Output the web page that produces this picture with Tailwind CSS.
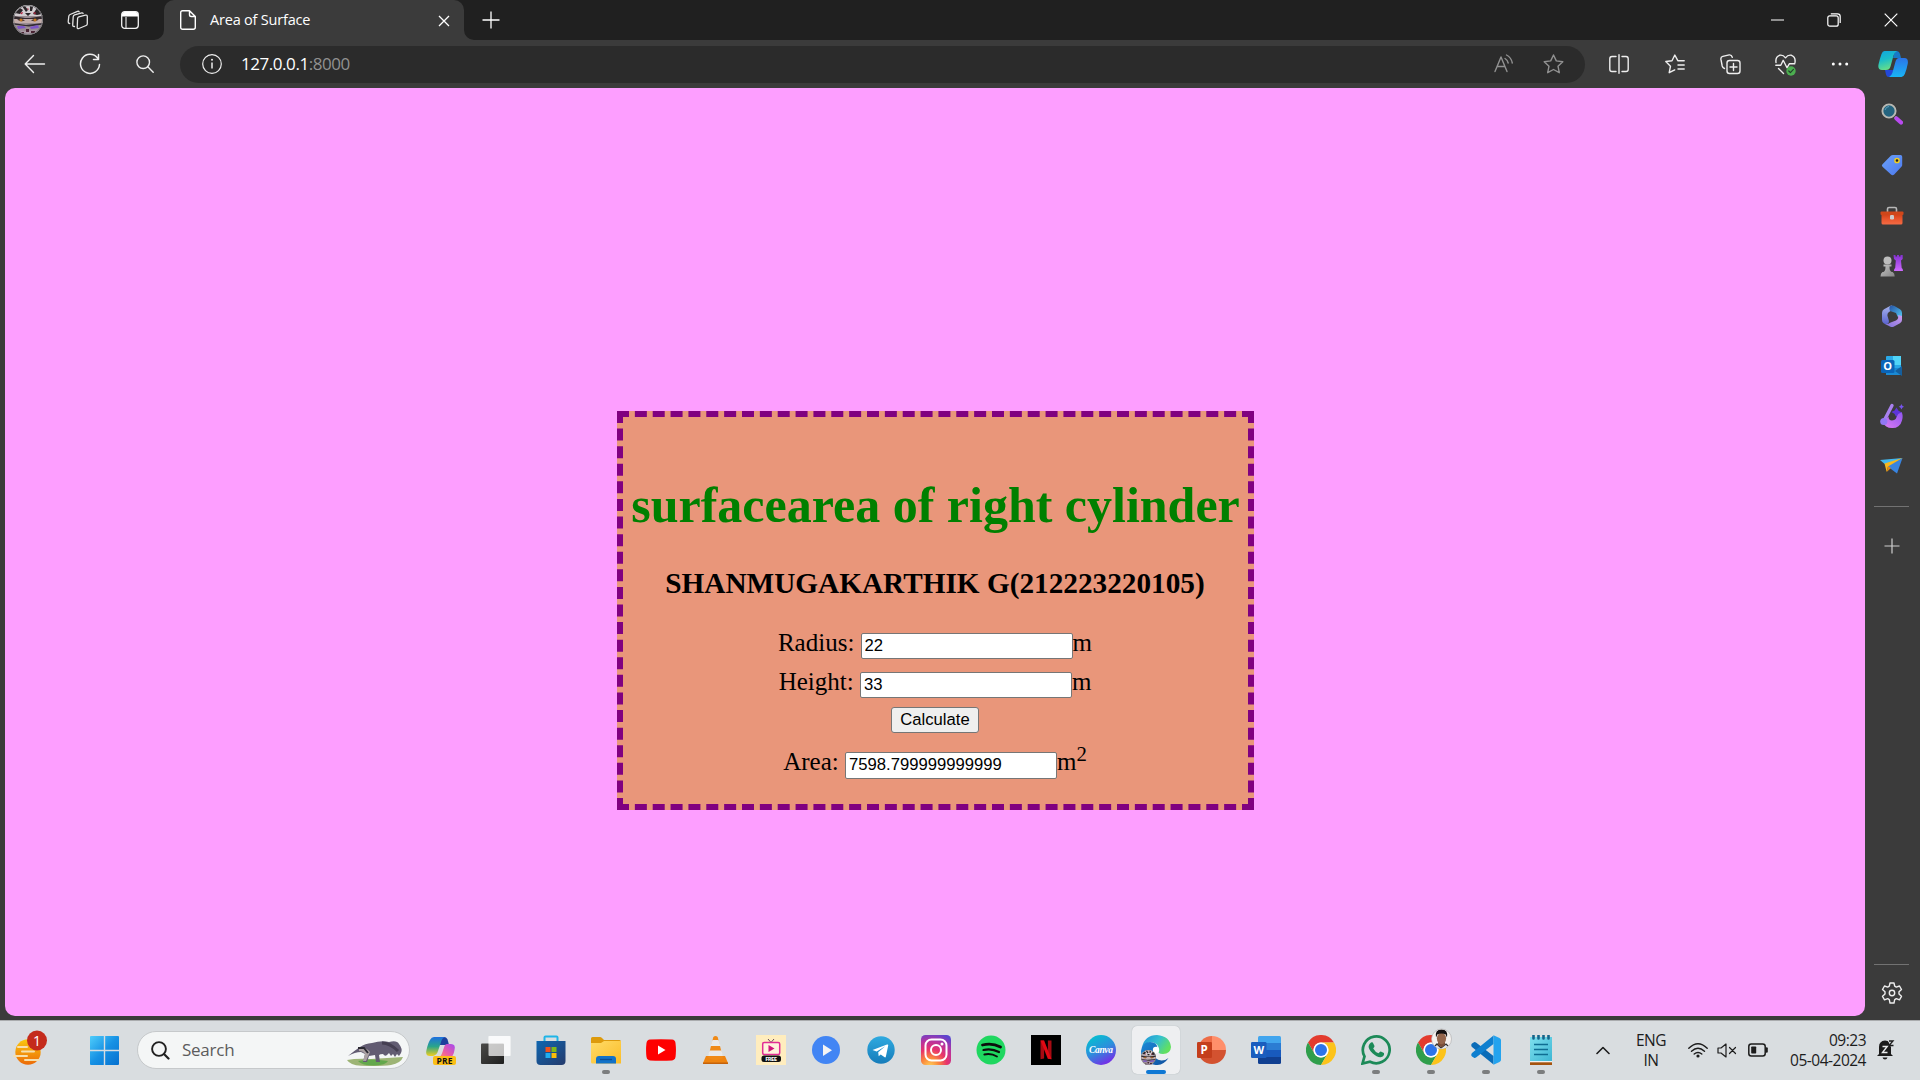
<!DOCTYPE html>
<html lang="en">
<head>
<meta charset="utf-8">
<title>Area of Surface</title>
<script src="https://cdn.jsdelivr.net/npm/@tailwindcss/browser@4"></script>
</head>
<body class="w-[1920px] h-[1080px] overflow-hidden bg-[#3b3b3b] font-['Open_Sans',sans-serif] flex flex-col">
<!-- shared gradients and repeated marks -->
<svg class="absolute w-0 h-0" aria-hidden="true">
  <defs>
    <linearGradient id="cpA" x1="0" y1="0" x2=".3" y2="1"><stop offset="0" stop-color="#10a5e0"/><stop offset=".5" stop-color="#1bbdc9"/><stop offset="1" stop-color="#63dd8b"/></linearGradient>
    <linearGradient id="cpB" x1="0" y1="0" x2="0" y2="1"><stop offset="0" stop-color="#2b74e8"/><stop offset="1" stop-color="#19b5f5"/></linearGradient>
    <linearGradient id="preA" x1="0" y1="0" x2="0" y2="1"><stop offset="0" stop-color="#1e6fe0"/><stop offset=".5" stop-color="#2aa58a"/><stop offset="1" stop-color="#f2cf1c"/></linearGradient>
    <linearGradient id="preB" x1="1" y1="0" x2="0" y2="1"><stop offset="0" stop-color="#a548f0"/><stop offset=".6" stop-color="#ee5fa0"/><stop offset="1" stop-color="#ff9a55"/></linearGradient>
    <linearGradient id="tagG" x1="0" y1="0" x2="1" y2="1"><stop offset="0" stop-color="#6ba2f8"/><stop offset="1" stop-color="#4c78ee"/></linearGradient>
    <linearGradient id="boxG" x1="0" y1="0" x2="0" y2="1"><stop offset="0" stop-color="#c93c12"/><stop offset=".5" stop-color="#e8542b"/><stop offset="1" stop-color="#f36b45"/></linearGradient>
    <linearGradient id="rookG" x1="0" y1="0" x2="0" y2="1"><stop offset="0" stop-color="#8330d0"/><stop offset="1" stop-color="#cf6bff"/></linearGradient>
    <linearGradient id="pawnG" x1="0" y1="0" x2="1" y2="1"><stop offset="0" stop-color="#c4c4c4"/><stop offset="1" stop-color="#858585"/></linearGradient>
    <linearGradient id="purG" x1="1" y1="0" x2="0" y2="1"><stop offset="0" stop-color="#8f55f0"/><stop offset="1" stop-color="#dd7cf3"/></linearGradient>
    <linearGradient id="winG" gradientUnits="userSpaceOnUse" x1="0" y1="0" x2="29" y2="29"><stop offset="0" stop-color="#4fcdfb"/><stop offset=".5" stop-color="#1691e4"/><stop offset="1" stop-color="#0670cf"/></linearGradient>
    <linearGradient id="sunG" x1="0" y1="0" x2="0" y2="1"><stop offset="0" stop-color="#fac80e"/><stop offset="1" stop-color="#ec6a08"/></linearGradient>
    <linearGradient id="storeG" x1="0" y1="0" x2="1" y2="1"><stop offset="0" stop-color="#0f66b0"/><stop offset="1" stop-color="#243a6c"/></linearGradient>
    <linearGradient id="foldG" x1="0" y1="0" x2="1" y2="1"><stop offset="0" stop-color="#ffdb68"/><stop offset="1" stop-color="#fbbd28"/></linearGradient>
    <linearGradient id="tgG" x1="0" y1="0" x2="0" y2="1"><stop offset="0" stop-color="#2faae0"/><stop offset="1" stop-color="#167cba"/></linearGradient>
    <radialGradient id="igG" cx=".3" cy="1.05" r="1.15"><stop offset="0" stop-color="#ffd25a"/><stop offset=".25" stop-color="#fb8a3c"/><stop offset=".5" stop-color="#e8336b"/><stop offset=".75" stop-color="#b633a0"/><stop offset="1" stop-color="#5a45d0"/></radialGradient>
    <linearGradient id="cvG" x1=".2" y1="0" x2=".7" y2="1"><stop offset="0" stop-color="#02c3cf"/><stop offset=".5" stop-color="#2c8fdc"/><stop offset="1" stop-color="#7b25e8"/></linearGradient>
    <linearGradient id="edA" x1="0" y1="0" x2="1" y2=".5"><stop offset="0" stop-color="#1f8fd8"/><stop offset=".55" stop-color="#34c0d0"/><stop offset="1" stop-color="#62e060"/></linearGradient>
    <linearGradient id="edB" x1="0" y1="0" x2="1" y2="1"><stop offset="0" stop-color="#1b8ad8"/><stop offset="1" stop-color="#0f4f9e"/></linearGradient>
    <linearGradient id="noteG" x1="0" y1="0" x2="1" y2="1"><stop offset="0" stop-color="#7fe0ee"/><stop offset="1" stop-color="#3db6d4"/></linearGradient>
    <linearGradient id="mA" x1="0" y1="0" x2="0" y2="1"><stop offset="0" stop-color="#a9b4ec"/><stop offset="1" stop-color="#5a63cf"/></linearGradient>
    <linearGradient id="mB" x1="0" y1="0" x2="1" y2="1"><stop offset="0" stop-color="#2450a4"/><stop offset="1" stop-color="#56d0f6"/></linearGradient>
    <linearGradient id="mC" x1="0" y1="1" x2="1" y2="0"><stop offset="0" stop-color="#7b72da"/><stop offset="1" stop-color="#cf9af0"/></linearGradient>
    <linearGradient id="tvA" x1="0" y1="0" x2="1" y2="1"><stop offset="0" stop-color="#4a4a48"/><stop offset="1" stop-color="#1f1f1f"/></linearGradient>
    <clipPath id="ava"><circle cx="15" cy="15" r="15"/></clipPath>
    <clipPath id="face"><circle cx="25.500" cy="4" r="9.700"/></clipPath>
    <symbol id="eyes" viewBox="0 0 30 30">
      <g clip-path="url(#ava)">
        <rect width="30" height="30" fill="#9a8d92"/>
        <rect width="30" height="11" fill="#d2cdd0"/>
        <path d="M2 8l5-5 3 2-3 4zM9 1l3 0 3 4-2 2zM17 1l3 1-1 4-2 0zM20 9l4-6 2 1 3 5-5 1zM12 8l6 0-3 3z" fill="#2a2528"/>
        <path d="M7 8l3-1-1 2.500zM20 7.500l3 0-1 2zM14 3l2 1-1 1z" fill="#b5223e"/>
        <path d="M0 11l12 2 5 0 13-2v3l-12 1-18-1z" fill="#332a2f"/>
        <rect y="14" width="30" height="4" fill="#c3adab"/>
        <path d="M4 14.500q4-2 8 1-4 2-8-1zM18 15.500q4-3 8-1-4 3-8 1z" fill="#4b3835"/>
        <circle cx="8" cy="15" r="1.500" fill="#c5781e"/><circle cx="22" cy="15" r="1.500" fill="#c5781e"/>
        <path d="M0 18l13 2 17-2v1.500l-14 2-16-2z" fill="#332b35"/>
        <path d="M4 21h7l2 2-8 1zM17 22l8-2 1 3-8 1z" fill="#7d55c8"/>
        <path d="M0 25l12 1 18-1v5h-30z" fill="#ab9aa6"/>
        <path d="M8 27h3v2h-3zM18 26h4v2h-4zM13 24h3v3h-3z" fill="#4a2434"/>
      </g>
      <circle cx="15" cy="15" r="14.500" fill="none" stroke="#77777a"/>
    </symbol>
    <symbol id="chrome" viewBox="0 0 30 30">
      <path d="M2 7.500A15 15 0 0 1 28 7.500L15 7.500A7.500 7.500 0 0 0 8.500 18.750z" fill="#e33b2e"/>
      <path d="M2 7.500A15 15 0 0 0 15 30L21.500 18.750A7.500 7.500 0 0 1 8.500 18.750z" fill="#2f9e4b"/>
      <path d="M28 7.500A15 15 0 0 1 15 30L21.500 18.750A7.500 7.500 0 0 0 15 7.500z" fill="#fcc31b"/>
      <circle cx="15" cy="15" r="7.500" fill="#fff"/><circle cx="15" cy="15" r="6" fill="#2d74ea"/>
    </symbol>
  </defs>
</svg>

<!-- tab strip -->
<header class="h-10 shrink-0 bg-[#202020] flex items-center">
  <div class="w-14 flex justify-center"><svg class="size-[30px]"><use href="#eyes"/></svg></div>
  <div class="w-[43px] flex justify-center">
    <svg width="22" height="20" viewBox="0 0 22 20" fill="none" stroke="#e4e4e4" stroke-width="1.300" stroke-linejoin="round" stroke-linecap="round"><path d="M10.600 8.300q.2-1 1.200-1.400l6.600-1.800q1.900-.4 1.900 1.400v7.300q0 1.200-1.200 1.700l-7.200 3q-1.700.6-1.700-1z"/><path d="M7.500 16.500q-2 .2-1.800-1.600l.5-8.200q.1-1.300 1.400-1.800l7.200-2q1-.2 1.300.6"/><path d="M2.700 13.500q-1.600-.2-1.500-1.800l.6-5.500q.1-1.200 1.300-1.700l7.400-3.100q1.300-.4 1.700.5"/></svg>
  </div>
  <div class="w-[61px] flex justify-center">
    <svg width="18" height="18" viewBox="0 0 18 18" fill="none"><rect x=".7" y=".7" width="16.600" height="16.600" rx="3" stroke="#f2f2f2" stroke-width="1.300"/><path d="M1 5.500V3.500a2.500 2.500 0 0 1 2.500-2.500h11A2.500 2.500 0 0 1 17 3.500v2z" fill="#fff"/><path d="M5 6v11" stroke="#ddd" stroke-width="1.200"/></svg>
  </div>
  <div class="ml-1 w-[300px] h-10 bg-[#3b3b3b] rounded-t-[10px] relative flex items-center">
    <svg class="absolute -left-[10px] bottom-0" width="10" height="10"><path d="M10 0v10H0A10 10 0 0 0 10 0z" fill="#3b3b3b"/></svg>
    <svg class="absolute -right-[10px] bottom-0" width="10" height="10"><path d="M0 0v10h10A10 10 0 0 1 0 0z" fill="#3b3b3b"/></svg>
    <svg class="ml-4" width="16" height="20" viewBox="0 0 16 20" fill="none" stroke="#fff" stroke-width="1.400" stroke-linejoin="round"><path d="M2.500.7h7l5.800 5.800v10.800q0 2-2 2H2.700q-2 0-2-2V2.700q0-2 1.800-2zM9.500.7v4q0 1.800 1.800 1.800h4"/></svg>
    <span class="ml-[14px] text-[14.500px] tracking-[-0.200px] text-white whitespace-nowrap leading-5">Area of Surface</span>
    <svg class="ml-auto mr-[14px] mt-px" width="12" height="12" viewBox="0 0 12 12" stroke="#fff" stroke-width="1.300"><path d="M1 1l10 10M11 1L1 11"/></svg>
  </div>
  <div class="w-[53px] flex justify-center"><svg width="18" height="18" viewBox="0 0 18 18" stroke="#fff" stroke-width="1.300"><path d="M9 .5v17M.5 9h17"/></svg></div>
  <div class="ml-auto flex items-center">
    <div class="w-[57px] flex justify-center"><svg width="13" height="13" viewBox="0 0 13 13"><path d="M0 6h13" stroke="#fff"/></svg></div>
    <div class="w-[56px] flex justify-center"><svg width="14" height="14" viewBox="0 0 14 14" fill="none" stroke="#fff" stroke-width="1.200"><rect x=".8" y="2.800" width="10.400" height="10.400" rx="2"/><path d="M3.800.8h6.700q2.700 0 2.700 2.700v6.500"/></svg></div>
    <div class="w-[58px] flex justify-center"><svg width="14" height="14" viewBox="0 0 14 14" stroke="#fff" stroke-width="1.200"><path d="M.7.7l12.600 12.600M13.300.7L.7 13.300"/></svg></div>
  </div>
</header>

<!-- toolbar -->
<nav class="h-12 shrink-0 bg-[#3b3b3b] flex items-center pl-[7px]">
  <div class="w-14 flex justify-center"><svg width="22" height="20" viewBox="0 0 22 20" fill="none" stroke="#eee" stroke-width="1.400" stroke-linecap="round" stroke-linejoin="round"><path d="M20.500 10H1.500M9.500 1.500L1.200 10l8.300 8.500"/></svg></div>
  <div class="w-[54px] flex justify-center"><svg width="22" height="22" viewBox="0 0 22 22" fill="none" stroke="#eee" stroke-width="1.500" stroke-linecap="round" stroke-linejoin="round"><path d="M20.500 11.500a9.500 9.500 0 1 1-2-6.500M19.500 1.500v5h-5"/></svg></div>
  <div class="w-[55px] flex justify-center"><svg width="18" height="18" viewBox="0 0 18 18" fill="none" stroke="#eee" stroke-width="1.400" stroke-linecap="round"><circle cx="7.200" cy="7.200" r="6.300"/><path d="M11.800 11.800l5.400 5.400"/></svg></div>
  <div class="ml-[8px] w-[1405px] h-[37px] rounded-full bg-[#2b2b2b] flex items-center">
    <svg class="ml-[22px]" width="20" height="20" viewBox="0 0 20 20" fill="none" stroke="#eee" stroke-width="1.200"><circle cx="10" cy="10" r="9.300"/><path d="M10 8.500v6" stroke-width="1.500"/><circle cx="10" cy="5.800" r="1" fill="#eee" stroke="none"/></svg>
    <span class="ml-[19px] text-[17px] text-white tracking-[-0.450px] leading-5">127.0.0.1<span class="text-[#919191]">:8000</span></span>
    <svg class="ml-auto mb-0.5" width="20" height="19" viewBox="0 0 20 19" fill="none" stroke="#919191" stroke-width="1.400" stroke-linecap="round" stroke-linejoin="round"><path d="M1 17.500L7 3l6 14.500M3 12.500h8"/><path d="M11 4.500q2.600 1.500 3.200 4.500M12.500 1q4.800 2.500 5.800 8"/></svg>
    <svg class="ml-[29px] mr-[21px]" width="21" height="20" viewBox="0 0 21 20" fill="none" stroke="#919191" stroke-width="1.400" stroke-linejoin="round"><path d="M10.500 1l2.800 5.900 6.500.8-4.800 4.500 1.300 6.500-5.800-3.200-5.800 3.200L6 12.200 1.200 7.700l6.500-.8z"/></svg>
  </div>
  <div class="ml-[7px] w-[54px] flex justify-center"><svg width="20" height="20" viewBox="0 0 20 20" fill="none" stroke="#eee" stroke-width="1.400" stroke-linecap="round"><path d="M10 .7v18.600M7 2.500H3Q.8 2.500.8 4.700v10.600q0 2.200 2.200 2.200h4M13 2.500h4q2.200 0 2.200 2.200v10.600q0 2.200-2.200 2.200h-4"/></svg></div>
  <div class="w-[57px] flex justify-center"><svg width="20" height="20" viewBox="0 0 20 20" fill="none" stroke="#eee" stroke-width="1.400" stroke-linecap="round" stroke-linejoin="round"><path d="M19.200 6.700h-6.400L9.800 1 7 6.700.8 7.500l4.700 4.700-1.300 6.500 5.500-2.800M13 11h6.200M13 15h6.200"/></svg></div>
  <div class="w-[55px] flex justify-center"><svg width="21" height="21" viewBox="0 0 21 21" fill="none" stroke="#eee" stroke-width="1.400" stroke-linecap="round" stroke-linejoin="round"><rect x="7" y="6.500" width="13" height="13" rx="2.500"/><path d="M13.500 9.500v7M10 13h7M4.500 14.500Q2.600 13.800 2.200 12L.9 5.200Q.6 3 2.800 2.400L9.200.9Q11.500.6 12.300 3.300"/></svg></div>
  <div class="w-[55px] flex justify-center"><svg class="mt-0.5" width="21" height="22" viewBox="0 0 21 22" fill="none" stroke="#eee" stroke-width="1.400" stroke-linecap="round" stroke-linejoin="round"><path d="M1 8.500Q.2 3 4.500 1.300 8 .5 10.500 3.800 13 .5 16.500 1.300 20.800 3 20 8.500"/><path d="M.8 11.300h5l2.400-5 3.800 7.500 2.300-4h5.500M3.500 14.500l5 5"/><circle cx="16" cy="17" r="4.700" fill="#4caf50" stroke="none"/><path d="M13.800 17l1.600 1.600 3-3.200" stroke="#23402a" stroke-width="1.200"/></svg></div>
  <div class="w-[54px] flex justify-center"><svg width="18" height="4" viewBox="0 0 18 4" fill="#fff"><circle cx="2.300" cy="2" r="1.500"/><circle cx="9" cy="2" r="1.500"/><circle cx="15.700" cy="2" r="1.500"/></svg></div>
  <div class="w-[51px] flex justify-center"><svg width="30" height="28" viewBox="0 0 30 28"><path d="M7 20h9l-2 5.500Q13 27 11 27 8.500 27 8 24.500z" fill="#2348d8"/><path d="M17 1h1.500Q21 1 22 4l1 4h-8z" fill="#1878c8"/><path d="M6.500 1H19q-2.500 1-3.500 4.500l-3 11Q11.500 20 8 20H4Q-.5 20 .5 14.500 2 8 3.500 4 4.500 1 6.500 1z" fill="url(#cpA)"/><path d="M21 8h5.500q4 0 3.300 5.500-1.200 6.500-3 10.500-1.300 3-3.300 3H11q2.500-1 3.500-4.500l3-11Q18.500 8 21 8z" fill="url(#cpB)"/></svg></div>
</nav>

<main class="h-[932px] shrink-0 flex pl-[5px]">
  <!-- page viewport -->
  <section class="w-[1860px] h-[928px] bg-[#fd9eff] rounded-[10px] font-['Liberation_Serif',serif] text-black pt-[323px] pl-[612px]">
    <div class="w-[637px] h-[399px] border-6 border-dashed border-[#800080] bg-[#e9967a] flex flex-col items-center pt-[60px] text-[25px] leading-7">
      <h1 class="text-[50px] leading-[56px] font-bold text-[#008000] whitespace-nowrap">surfacearea of right cylinder</h1>
      <h3 class="mt-[33px] -ml-px text-[29.250px] leading-[34px] font-bold whitespace-nowrap">SHANMUGAKARTHIK G(212223220105)</h3>
      <div class="mt-[29px] -ml-px h-7 flex">
        <label class="whitespace-pre">Radius: </label>
        <input type="text" value="22" class="mt-1 w-[212px] h-[26px] px-[3px] bg-white border border-[#767676] rounded-[2px] font-['Liberation_Sans',sans-serif] text-[16.670px]">
        <span>m</span>
      </div>
      <div class="mt-[11px] -ml-px h-7 flex">
        <label class="whitespace-pre">Height: </label>
        <input type="text" value="33" class="mt-1 w-[212px] h-[26px] px-[3px] bg-white border border-[#767676] rounded-[2px] font-['Liberation_Sans',sans-serif] text-[16.670px]">
        <span>m</span>
      </div>
      <button class="mt-[11px] -ml-px w-[88px] h-[26px] bg-[#efefef] border border-[#767676] rounded-[3px] font-['Liberation_Sans',sans-serif] text-[16.670px] leading-[22px]">Calculate</button>
      <div class="mt-[15px] -ml-px h-7 flex">
        <label class="whitespace-pre">Area: </label>
        <input type="text" value="7598.799999999999" class="mt-1 w-[212px] h-[27px] px-[3px] pb-[2px] bg-white border border-[#767676] rounded-[2px] font-['Liberation_Sans',sans-serif] text-[16.670px]">
        <span>m</span><span class="text-[20.800px] leading-5 -mt-[4px]">2</span>
      </div>
    </div>
  </section>

  <!-- sidebar -->
  <aside class="w-[53px] h-[932px] flex flex-col items-center">
    <div class="h-[51px] flex items-center"><svg width="22" height="22" viewBox="0 0 22 22"><path d="M14 14l3 3" stroke="#bbb" stroke-width="2.500"/><circle cx="8" cy="8" r="6.600" fill="#24647f" stroke="#b9b9b3" stroke-width="1.900"/><path d="M4 7q1-3.500 4-3.500" stroke="#5d9db8" fill="none"/><path d="M15.500 15.500l4.500 4" stroke="#b94af0" stroke-width="4.200" stroke-linecap="round"/></svg></div>
    <div class="h-[52px] flex items-center"><svg width="22" height="22" viewBox="0 0 22 22"><path d="M12 1h7.500q1.700 0 1.700 1.700V11q0 1-.8 1.800l-7.200 7.600q-1.700 1.500-3.200 0l-8.500-7.600q-1.300-1.300 0-2.600L9.800 1.800Q10.500 1 12 1z" fill="url(#tagG)"/><circle cx="16" cy="6.500" r="2.100" fill="#222" stroke="#f0cd22" stroke-width="1.500"/></svg></div>
    <div class="h-[50px] flex items-center"><svg width="24" height="20" viewBox="0 0 24 20"><path d="M7.500 6V3q0-1.500 1.500-1.500h6Q16.500 1.500 16.500 3v3" fill="none" stroke="#b7b7b7" stroke-width="1.600"/><rect x="1.500" y="7" width="21" height="11.500" rx="1.500" fill="url(#boxG)"/><rect x=".5" y="5.500" width="23" height="3.500" rx="1" fill="#d0471a"/><rect x="10" y="9" width="4" height="4.500" rx="1.200" fill="#ccc"/></svg></div>
    <div class="h-[50px] flex items-center"><svg width="24" height="24" viewBox="0 0 24 24"><path d="M13.500 1h2v1.500h1.500V1h2v1.500h1.500V1h2.200v4l-1.700 1.500.7 7.500q1.300.5 1.300 3h-9q0-2.500 1.200-3l.6-7.500-1.800-1.500z" fill="url(#rookG)"/><circle cx="7.500" cy="6.500" r="4" fill="#bdbdbd"/><path d="M3.500 10.500h8v2h-2q0 4.500 2.200 5.500h1q2 1 2 4.500H.5q0-3.500 2-4.500h1Q5.500 17 5.500 12.500h-2z" fill="url(#pawnG)"/></svg></div>
    <div class="h-[49px] flex items-center"><svg width="22" height="22" viewBox="0 0 22 22"><path d="M9.500.8L3 4.300Q1 5.500 1 8v7Q1 17.500 3 18.500q3 1.500 4.500-.5.700-1.200.2-3L6.500 11Q6 8.500 8 7l4-2.500Q12-.5 9.500.8z" fill="url(#mA)"/><path d="M9.500.8q1.500-.8 3.500 0l6 3.500q2 1.200 2 3.700v6l-4.500-2.500L15 8 9 6Q7.500 2.500 9.500.8z" fill="url(#mB)"/><path d="M21 11v4q0 2-2 3.200l-6 3.300q-2 1-4 0L3.500 18.700q3.500.8 5.500-1l6-2.200q3-1.200 2-5.500z" fill="url(#mC)"/></svg></div>
    <div class="h-[52px] flex items-center"><svg width="22" height="22" viewBox="0 0 22 22"><rect x="5" y="1" width="15" height="19" rx="1" fill="#2aa9e8"/><path d="M12 1h8v9h-8z" fill="#50d4f8"/><path d="M5 13h16v7H5z" fill="#1a8ad4"/><path d="M21 11l-7 5 7 5z" fill="#155f9e"/><rect x="0" y="5" width="13.500" height="13" rx="1.500" fill="#0a64b8"/><text x="6.700" y="15.200" text-anchor="middle" font-family="Open Sans" font-size="11" font-weight="700" fill="#fff">O</text></svg></div>
    <div class="h-[47px] flex items-center"><svg width="24" height="26" viewBox="0 0 24 26"><path d="M8.500 13.500Q8.500 17.500 12 17.500q5 0 5.500-7.500l4-1q2 3 .5 8.500A9.500 9.500 0 0 1 12 25Q5 25 3 19z" fill="url(#purG)"/><path d="M12 2.500L5 16" stroke="#a880ee" stroke-width="3.400" stroke-linecap="round"/><circle cx="3.800" cy="18.500" r="3.600" fill="#9277f5"/><path d="M16.500 4.500l2 3.200 3 1.500-3.300 1.800-2 3-1.800-3.200-3-1.800 3.200-1.600z" fill="#5d35d8"/><path d="M21.500 1l.8 1.800 1.700.9-1.700 1-.8 1.700-1-1.700-1.700-1 1.700-.9z" fill="#7552ea"/></svg></div>
    <div class="h-[52px] flex items-center"><svg width="23" height="17" viewBox="0 0 23 17"><path d="M0 3L22.500 1 7 9z" fill="#43b8ee"/><path d="M22.500 1L7 9l10 7.500z" fill="#3884e0"/><path d="M22.500 1L4.500 6.500l2.200 8.500L8 9.500z" fill="#f7b91e"/><path d="M6.700 15L8 9l3 2z" fill="#e08a14"/></svg></div>
    <div class="mt-[15px] w-[35px] h-px bg-[#727272]"></div>
    <svg class="mt-[31px]" width="16" height="16" viewBox="0 0 16 16"><path d="M8 .5v15M.5 8h15" stroke="#cfcfcf" stroke-width="1.200"/></svg>
    <div class="mt-auto w-[35px] h-px bg-[#727272]"></div>
    <svg class="mt-[17px] mb-[16px]" width="22" height="22" viewBox="0 0 22 22" fill="none" stroke="#eee" stroke-width="1.400" stroke-linejoin="round"><path d="M9 1h4l.7 3.200 1.600.9 3.200-1.100 2 3.500-2.500 2.300v2.200l2.500 2.300-2 3.500-3.200-1.100-1.600.9L13 21H9l-.7-3.400-1.600-.9-3.200 1.100-2-3.500L4 12V9.800L1.500 7.500l2-3.500 3.200 1.100 1.600-.9z"/><circle cx="11" cy="11" r="2.700"/></svg>
  </aside>
</main>

<!-- taskbar -->
<footer class="h-[60px] shrink-0 bg-[#d9dde0] border-t border-[#aaacae] flex items-center text-[#1c1c1c]">
  <div class="w-[90px] pl-[13px] pb-[5px]"><svg width="36" height="36" viewBox="0 0 36 36"><circle cx="15" cy="22" r="12.700" fill="url(#sunG)"/><path d="M5 17h9M9 21.500h12M1 26h13M12 30h14" stroke="#f6dfae" stroke-width="2" stroke-linecap="round"/><circle cx="24" cy="10.500" r="10" fill="#c42b1c"/><text x="24" y="15.500" text-anchor="middle" font-family="Open Sans" font-size="14" fill="#fff">1</text></svg></div>
  <svg width="29" height="29" viewBox="0 0 29 29" fill="url(#winG)"><path d="M1 0h12.800v13.800H0V1q0-1 1-1zM15.200 0H28q1 0 1 1v12.800H15.200zM0 15.200h13.800V29H1q-1 0-1-1zM15.200 15.200H29V28q0 1-1 1H15.200z"/></svg>
  <div class="ml-[18px] w-[273px] h-[38px] mb-px rounded-full bg-[#f4f6f6] border border-[#c6c9cb] flex items-center">
    <svg class="ml-[13px]" width="19" height="19" viewBox="0 0 19 19" fill="none" stroke="#202020" stroke-linecap="round"><circle cx="8" cy="8" r="6.900" stroke-width="1.900"/><path d="M13 13l4.500 4.500" stroke-width="2.200"/></svg>
    <span class="ml-[12px] text-[17px] text-[#5c5c5c] tracking-[-0.25px]">Search</span>
    <svg class="ml-auto mr-[5px] mt-1.5" width="58" height="27" viewBox="0 0 58 27"><path d="M1 20q10-2 24-1 16-1 32-2-2 6-12 8-10 1.500-30 .8Q4 25 1 20z" fill="#9db475"/><path d="M12 21q12-3 30 0-2 4-14 4.500-12 0-16-4.500z" fill="#63a84c"/><path d="M2 16q6-5 12-9 5-3.500 12-4 10-3 17-1 8-2 10 2 4 5 2 9l-2 3-2-2-2 3-2-3-2 2-2-3-2 2q-2 2-4-1-3 0-4 1l1 7h-4l-1-7-6 1-2 6h-4l2-8-4-2Q9 12 2 16z" fill="#625c72"/><path d="M13 8q6-2 11 4l-4 9h-3l2-7q-2-3-6-3z" fill="#aba1a2"/><path d="M12 8l6 0 4 5" stroke="#2b2a33" stroke-width="2" fill="none"/><path d="M36 3q8 0 16 8" stroke="#453f52" stroke-width="3" fill="none"/></svg>
  </div>
  <div class="ml-[3px] h-full flex [&>div]:w-[55px] [&>div]:h-full [&>div]:flex [&>div]:flex-col [&>div]:items-center [&>div]:pt-[14px] [&>div>svg]:shrink-0">
    <div><svg width="30" height="30" viewBox="0 0 30 30"><path d="M13 2h5q3 0 4 4l1 4h-9z" fill="#1c3f9c"/><path d="M8 2h11q-3 1-4 5l-3 9q-1 4-5 5H4q-5 0-3.500-6Q2 8 4 5q1.500-3 4-3z" fill="url(#preA)"/><path d="M21 9h4q5 0 3.500 6-1 6-4 8H12q3-1 4.500-6l2-6q.8-2 2.500-2z" fill="url(#preB)"/><rect x="7" y="21" width="23" height="9" rx="2" fill="#fbbf16"/><text x="18.500" y="28.700" text-anchor="middle" font-family="Open Sans" font-size="8.500" font-weight="700" textLength="16" fill="#111">PRE</text></svg></div>
    <div><svg width="30" height="30" viewBox="0 0 30 30"><rect y="8.500" width="23" height="20.500" rx="1" fill="url(#tvA)"/><rect x="7.500" y="1" width="22" height="20" rx="1" fill="#fff" fill-opacity=".72"/><path d="M23 1h6.500v20H23zM7.500 1H23v7.500H7.500z" fill="#fff" fill-opacity=".45"/></svg></div>
    <div><svg width="30" height="30" viewBox="0 0 30 30"><path d="M8.500 7V2.500Q8.500 1.500 9.500 1.500h11q1 0 1 1V7" fill="none" stroke="#1fb5e8" stroke-width="2"/><path d="M.5 6h29v20q0 4-4 4h-21q-4 0-4-4z" fill="url(#storeG)"/><path d="M9.500 12h5v5h-5z" fill="#f1511b"/><path d="M15.500 12h5v5h-5z" fill="#80b918"/><path d="M9.500 18h5v5h-5z" fill="#1fadef"/><path d="M15.500 18h5v5h-5z" fill="#fbbc09"/></svg></div>
    <div><svg width="30" height="30" viewBox="0 0 30 30"><path d="M0 3.500Q0 2 1.500 2H9q1 0 2 1l2 2h15.500Q30 5 30 6.500V12H0z" fill="#dd9a0c"/><path d="M0 8h10l3-2h17v22.500H1.500Q0 28.500 0 27z" fill="url(#foldG)"/><path d="M5 28.500V24q0-3 3-3h14q3 0 3 3v4.500z" fill="#1272c8"/><path d="M9 24.500h12" stroke="#0b4d95" stroke-width="1.300"/></svg><i class="mt-[5px] w-2 h-1 rounded-full bg-[#7b7d7e]"></i></div>
    <div><svg width="30" height="30" viewBox="0 0 30 30"><path d="M4 4.600q11-.9 22 0 3 .3 3.500 3.500.9 7 0 14Q29 25 26 25.400q-11 .9-22 0-3-.3-3.500-3.300-.9-7 0-14Q1 5 4 4.600z" fill="#fe0000"/><path d="M12 10.500l7.500 4.500-7.500 4.500z" fill="#fff"/></svg></div>
    <div><svg width="30" height="30" viewBox="0 0 30 30"><path d="M5 21h19l3 7H2z" fill="#ef8410"/><path d="M12.300 2q2.200-2 4.400 0L22 23q-7.500 4-15 0z" fill="#f08a17"/><path d="M11.500 5h6l2 6h-10zM8.500 15.500h12l1.500 5.500H7z" fill="#e9e9e9"/><path d="M2 27.500h25v1.500H2z" fill="#c5620a"/></svg></div>
    <div><svg width="30" height="30" viewBox="0 0 30 30"><rect width="30" height="30" fill="#ffedbe"/><path d="M12 4l3 3.500 3-3.500" fill="none" stroke="#6b4a60"/><rect x="6.700" y="7.500" width="17" height="12" rx="1.500" fill="#fff3dd" stroke="#e22d94" stroke-width="1.500"/><path d="M12.500 10l6 3.500-6 3.500z" fill="#d1157c"/><rect x="5.500" y="20.500" width="19.500" height="6.500" rx="2.500" fill="#111"/><text x="15.200" y="26" text-anchor="middle" font-family="Open Sans" font-size="6" font-weight="700" textLength="12" fill="#fff">FREE</text></svg></div>
    <div><svg width="30" height="30" viewBox="0 0 30 30"><circle cx="15" cy="15" r="14" fill="#4285f4"/><path d="M12 9.500l9 5.700-9 5.700z" fill="#f4f4f4"/></svg></div>
    <div><svg width="30" height="30" viewBox="0 0 30 30"><circle cx="15" cy="15" r="13.700" fill="url(#tgG)"/><path d="M6.500 15L21 9.500q1.500-.4 1.200 1l-2.300 11q-.4 1.400-1.600.6l-3.600-2.700-2 1.900-.5-4 7-6-8.500 5.300z" fill="#fff"/></svg></div>
    <div><svg width="30" height="30" viewBox="0 0 30 30" fill="none"><rect width="30" height="30" rx="4.500" fill="url(#igG)"/><g stroke="#fff" stroke-width="2"><rect x="4.500" y="4.500" width="21" height="21" rx="6"/><circle cx="15" cy="15" r="5"/></g><circle cx="21" cy="9" r="1.500" fill="#fff"/></svg></div>
    <div><svg width="30" height="30" viewBox="0 0 30 30" fill="none" stroke="#0c0c0c" stroke-linecap="round"><circle cx="15" cy="15" r="14.500" fill="#1fd760" stroke="none"/><path d="M6.500 10q9.500-2.500 18 2" stroke-width="2.800"/><path d="M7.500 15q8-2 15.500 2" stroke-width="2.200"/><path d="M8.300 19.500q6.700-1.600 12.700 2" stroke-width="1.800"/></svg></div>
    <div><svg width="30" height="30" viewBox="0 0 30 30"><rect width="30" height="30" fill="#000"/><path d="M9.500 5.500h3.600v18l-3.600.8zM16.900 5.500h3.600v18.800l-3.600-.8z" fill="#a80a12"/><path d="M9.500 5.500h3.600l7.400 18.800-3.700-.6z" fill="#e30914"/></svg></div>
    <div><svg width="30" height="30" viewBox="0 0 30 30"><circle cx="15" cy="15" r="15" fill="url(#cvG)"/><text x="15" y="18" text-anchor="middle" font-family="Liberation Serif" font-style="italic" font-weight="700" font-size="9.500" textLength="24" fill="#fff">Canva</text></svg></div>
    <div class="relative"><span class="absolute top-[5px] left-[3.500px] w-[48px] h-[48px] rounded-[5px] bg-[#eeeff1] shadow-[0_0_1px_#9aa0a4]"></span>
      <svg class="relative" width="30" height="30" viewBox="0 0 30 30"><path d="M1 12Q4 0 16 0q13 1 14 12-.5 7-8 7-6 0-4.500-4 1-4-3-6.500Q8 5 1 12z" fill="url(#edA)"/><path d="M0 16Q1 7 9 7q7 0 7.500 6-4 1-4 5 .5 7 8 7.500 4 0 7-2.500-5 7.500-13 7Q0 28 0 16z" fill="url(#edB)"/><circle cx="15" cy="15" r="3.200" fill="#fff"/><use href="#eyes" x="0" y="15" width="15" height="15"/></svg><i class="relative mt-[5px] w-5 h-1 rounded-full bg-[#0f78d4]"></i></div>
    <div><svg width="30" height="30" viewBox="0 0 30 30"><path d="M16 1a14 14 0 0 0-14 14h14z" fill="#ed6c47"/><path d="M16 1a14 14 0 0 1 14 14H16z" fill="#ff8f6b"/><path d="M2 15h28a14 14 0 0 1-28 0z" fill="#d35230"/><rect x="1" y="7" width="15" height="16" rx="1.300" fill="#c43e1c"/><text x="8" y="19" text-anchor="middle" font-family="Open Sans" font-weight="700" font-size="11.500" fill="#fff">P</text></svg></div>
    <div><svg width="30" height="30" viewBox="0 0 30 30"><path d="M7 8V2.500Q7 1 8.500 1h20Q30 1 30 2.500V8z" fill="#41a5ee"/><path d="M7 8h23v7H7z" fill="#2b7cd3"/><path d="M7 15h23v7H7z" fill="#185abd"/><path d="M7 22h23v5.500q0 1.500-1.500 1.500h-20Q7 29 7 27.500z" fill="#103f91"/><rect y="7" width="15.500" height="16" rx="1.300" fill="#1a5dbe"/><text x="7.700" y="18.800" text-anchor="middle" font-family="Open Sans" font-weight="700" font-size="11" fill="#fff">W</text></svg></div>
    <div><svg width="30" height="30"><use href="#chrome"/></svg></div>
    <div><svg width="30" height="30" viewBox="0 0 30 30" fill="none"><path d="M1.500 28.500l2-7.200A13.400 13.400 0 1 1 9 26.700z" stroke="#1c8a58" stroke-width="2.700"/><path d="M10 7.500q1-.6 1.800 0l1.700 3.500q.2.800-1.300 2.400 2 3.600 5.300 4.800 1.600-2 2.300-1.800l3.200 1.700q.6 3-2.700 4-4 .6-8.500-3.600T7.600 11q.6-2.500 2.400-3.500z" fill="#1c8a58"/></svg><i class="mt-[5px] w-2 h-1 rounded-full bg-[#7b7d7e]"></i></div>
    <div><svg class="overflow-visible" width="30" height="30" viewBox="0 0 30 30"><use href="#chrome" width="30" height="30"/><circle cx="25.500" cy="4" r="10" fill="#f4f1ef" stroke="#aaa" stroke-width=".6"/><g clip-path="url(#face)"><path d="M14 15q1-5 8-6h7q7 1 8 6z" fill="#e4e4e8"/><path d="M18 12l3-3 4 4 5-4 3 3" fill="none" stroke="#333" stroke-width="1.300"/><path d="M22 6h7v4l-3.500 2.500L22 10z" fill="#7a4e38"/><ellipse cx="25.500" cy="3.500" rx="4.600" ry="5.800" fill="#94654b"/><path d="M20 2.500Q18.500-5.300 25.500-5.500 32.500-5.300 31 2.500L29.500-.8q-4-1.500-8 0z" fill="#161213"/></g></svg><i class="mt-[5px] w-2 h-1 rounded-full bg-[#7b7d7e]"></i></div>
    <div><svg width="30" height="30" viewBox="0 0 30 30"><path d="M1 8.500l2-1.300q1-.5 2 .3L22.500 21v8.500L1 12q-1.500-2 0-3.500z" fill="#0b6cb8"/><path d="M1 21.500l2 1.300q1 .5 2-.3L22.500 9V.5L1 18q-1.500 2 0 3.500z" fill="#0f7fcf"/><path d="M22.500.3L28.500 3q1.500.8 1.500 2v20q0 1.200-1.500 2l-6 2.700z" fill="#24a3ee"/></svg><i class="mt-[5px] w-2 h-1 rounded-full bg-[#7b7d7e]"></i></div>
    <div><svg width="30" height="30" viewBox="0 0 30 30"><path d="M4 27h22v3H4z" fill="#a4530f"/><path d="M4 2h22v24H4z" fill="url(#noteG)"/><path d="M4 26h22v1.300H4z" fill="#f1f1f1"/><path d="M7.500.5v3M12.500.5v3M17.500.5v3M22.500.5v3" stroke="#14658a" stroke-width="2.600" stroke-linecap="round"/><path d="M8 9.500h14M8 14.500h14M8 19.500h14" stroke="#0f6d92" stroke-width="1.700"/></svg><i class="mt-[5px] w-2 h-1 rounded-full bg-[#7b7d7e]"></i></div>
  </div>
  <!-- tray -->
  <div class="ml-auto flex items-center pr-[25px] pb-px">
    <svg width="14" height="9" viewBox="0 0 14 9" fill="none" stroke="#1c1c1c" stroke-width="1.600" stroke-linecap="round" stroke-linejoin="round"><path d="M1 7.500l6-6 6 6"/></svg>
    <div class="ml-[26px] w-[30px] flex flex-col items-center text-[15.500px] leading-5 tracking-[-0.5px]"><span>ENG</span><span>IN</span></div>
    <svg class="ml-[22px]" width="20" height="15" viewBox="0 0 20 15" fill="none" stroke="#1c1c1c" stroke-width="1.400" stroke-linecap="round"><path d="M.8 5.300q9.200-9 18.400 0M3.500 8.300q6.500-6 13 0M6.200 11q3.800-3.200 7.600 0"/><circle cx="10" cy="13" r="1.600" fill="#1c1c1c" stroke="none"/></svg>
    <svg class="ml-[9px]" width="21" height="15" viewBox="0 0 21 15" fill="none" stroke="#1c1c1c" stroke-width="1.200" stroke-linecap="round" stroke-linejoin="round"><path d="M1 5h3l5-4v13l-5-4H1zM12.500 4.500l6 6M18.500 4.500l-6 6"/></svg>
    <svg class="ml-[10px]" width="21" height="14" viewBox="0 0 21 14" fill="none" stroke="#1c1c1c" stroke-width="1.500"><rect x=".8" y="1" width="16.400" height="12" rx="2.500"/><rect x="3.200" y="3.500" width="5" height="7" rx=".7" fill="#1c1c1c" stroke="none"/><path d="M18.700 5.300v3.400" stroke-width="2.200" stroke-linecap="round"/></svg>
    <div class="ml-[19px] w-[78px] flex flex-col items-end text-[15.500px] leading-5 tracking-[-0.5px] whitespace-nowrap"><span>09:23</span><span>05-04-2024</span></div>
    <svg class="ml-[11px]" width="18" height="20" viewBox="0 0 18 20"><path d="M2 14V7q0-6 6-6.500 6 .5 6 6.500v7l2 2H0z" fill="#1c1c1c"/><path d="M5.500 17.500h5Q10 19.500 8 19.500t-2.500-2z" fill="#1c1c1c"/><path d="M10.500-.5h8v7h-5z" fill="#d9dde0"/><path d="M12 1h4l-4 4.500h4.500" fill="none" stroke="#1c1c1c" stroke-width="1.300"/><path d="M5.500 6.500h4.700l-4.700 6h5" fill="none" stroke="#e9ebec" stroke-width="1.400"/></svg>
  </div>
</footer>
</body>
</html>
